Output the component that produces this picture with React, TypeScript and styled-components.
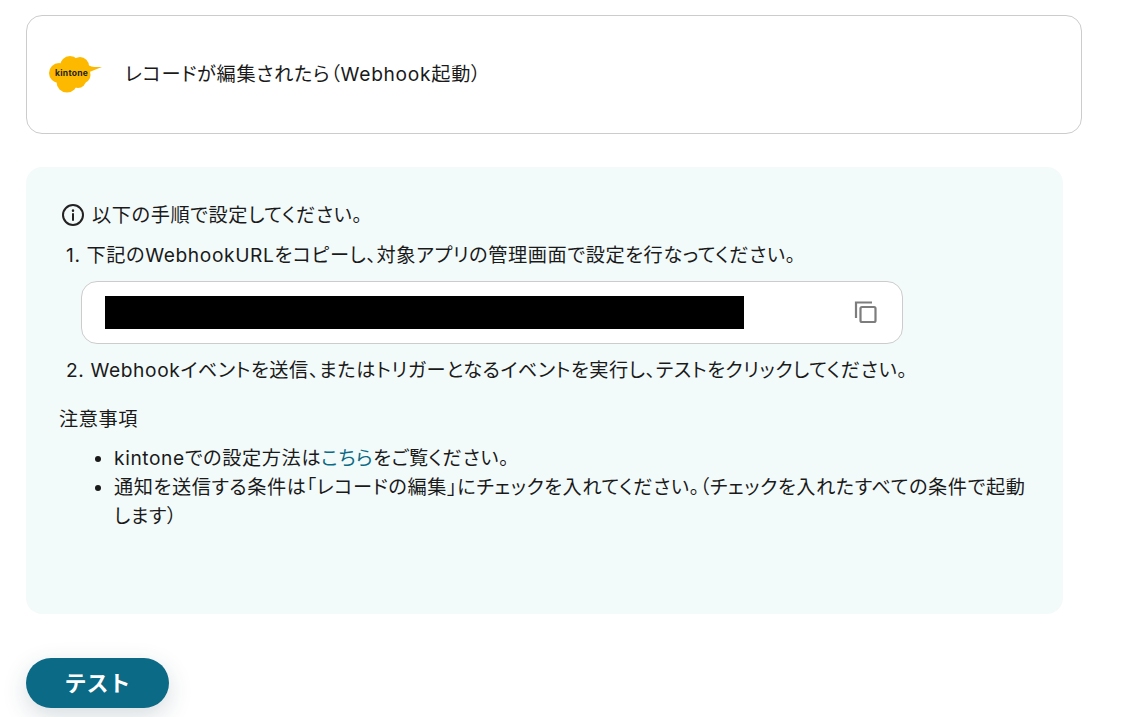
import React from "react";
import styled, { createGlobalStyle } from "styled-components";

const Global = createGlobalStyle`
  html, body { margin: 0; padding: 0; background: #fff; }
  body {
    font-family: Inter, "Noto Sans CJK JP", sans-serif;
    color: #1a1a1a;
    font-feature-settings: "palt";
    height: 717px;
    overflow: hidden;
  }
`;

const Page = styled.div`
  padding: 15px 0 0 26px;
  display: flex;
  flex-direction: column;
  align-items: flex-start;
`;

const TriggerCard = styled.div`
  box-sizing: border-box;
  width: 1056px;
  height: 119px;
  border: 1px solid #ccc;
  border-radius: 16px;
  display: flex;
  align-items: center;
  padding: 0 0 4px 22px;
  gap: 22px;
  font-size: 19.200px;
  letter-spacing: 0.7px;
`;

const InfoPanel = styled.div`
  box-sizing: border-box;
  width: 1037px;
  height: 447px;
  margin-top: 33px;
  background: #f3fbfa;
  border-radius: 16px;
  padding: 35px 33px 0 33px;
  font-size: 19.200px;
  line-height: 26px;
  letter-spacing: 0.6px;
`;

const Heading = styled.div`
  display: flex;
  align-items: center;
  gap: 7px;
  margin-left: 2px;
`;

const Steps = styled.div`
  margin: 14px 0 0 7px;
`;

const UrlBox = styled.div`
  box-sizing: border-box;
  width: 822px;
  height: 63px;
  margin: 13px 0 13px 15px;
  background: #fff;
  border: 1px solid #ccc;
  border-radius: 16px;
  display: flex;
  align-items: center;
  justify-content: space-between;
  padding: 0 23px;
`;

const Redacted = styled.div`
  width: 639px;
  height: 33px;
  background: #000;
`;

const NoteTitle = styled.div`
  margin-top: 23px;
`;

const Notes = styled.ul`
  margin: 12px 0 0;
  padding: 0 0 0 55px;
  width: 916px;
  line-height: 28.800px;
`;

const Link = styled.a`
  color: #0b6a85;
  text-decoration: none;
`;

const TestButton = styled.button`
  margin-top: 44px;
  width: 143px;
  height: 50px;
  border: none;
  border-radius: 25px;
  padding: 0 0 4px;
  background: #0b6a85;
  color: #fff;
  font: 700 22px Inter, "Noto Sans CJK JP", sans-serif;
  box-shadow: 0 8px 24px rgba(30, 60, 80, 0.18);
`;

const LogoMark = styled.svg`
  flex: none;
  margin-top: 5px;
`;

const LogoText = styled.text`
  font-family: Inter, sans-serif;
  font-weight: 700;
  font-size: 8.500px;
  letter-spacing: 0.3px;
  fill: #222;
`;

const Logo = () => (
  <LogoMark width="54" height="38" viewBox="0 0 54 38">
    <g fill="#fdb900">
      <circle cx="10" cy="17" r="10" />
      <circle cx="21" cy="10" r="10" />
      <circle cx="31" cy="10" r="9" />
      <circle cx="33" cy="19" r="8.500" />
      <circle cx="18" cy="26" r="10.500" />
      <circle cx="29" cy="24" r="8" />
      <path d="M36 7 C42 12 48 11 53 11 C48 13 42 15 36 18z" />
    </g>
    <LogoText x="6" y="19.500">kintone</LogoText>
  </LogoMark>
);

const InfoIcon = () => (
  <svg width="24" height="24" viewBox="0 0 24 24" fill="none" stroke="#222" strokeWidth="2" strokeLinecap="round">
    <circle cx="12" cy="12" r="10" />
    <path d="M12 11v6" />
    <path d="M12 7.500v.2" strokeWidth="2.400" />
  </svg>
);

const CopyIcon = () => (
  <svg width="28" height="28" viewBox="0 0 28 28" fill="none" stroke="#7d7d7d" strokeWidth="2.200">
    <path d="M5 19V3.500h16" />
    <rect x="9.500" y="8" width="15" height="15" rx="1.500" />
  </svg>
);

export default function App() {
  return (
    <Page>
      <Global />
      <TriggerCard>
        <Logo />
        <span>レコードが編集されたら（Webhook起動）</span>
      </TriggerCard>
      <InfoPanel>
        <Heading>
          <InfoIcon />
          <span>以下の手順で設定してください。</span>
        </Heading>
        <Steps>
          <div>1. 下記のWebhookURLをコピーし、対象アプリの管理画面で設定を行なってください。</div>
          <UrlBox>
            <Redacted />
            <CopyIcon />
          </UrlBox>
          <div>2. Webhookイベントを送信、またはトリガーとなるイベントを実行し、テストをクリックしてください。</div>
        </Steps>
        <NoteTitle>注意事項</NoteTitle>
        <Notes>
          <li>
            kintoneでの設定方法は<Link href="#">こちら</Link>をご覧ください。
          </li>
          <li>通知を送信する条件は「レコードの編集」にチェックを入れてください。（チェックを入れたすべての条件で起動します）</li>
        </Notes>
      </InfoPanel>
      <TestButton>テスト</TestButton>
    </Page>
  );
}
